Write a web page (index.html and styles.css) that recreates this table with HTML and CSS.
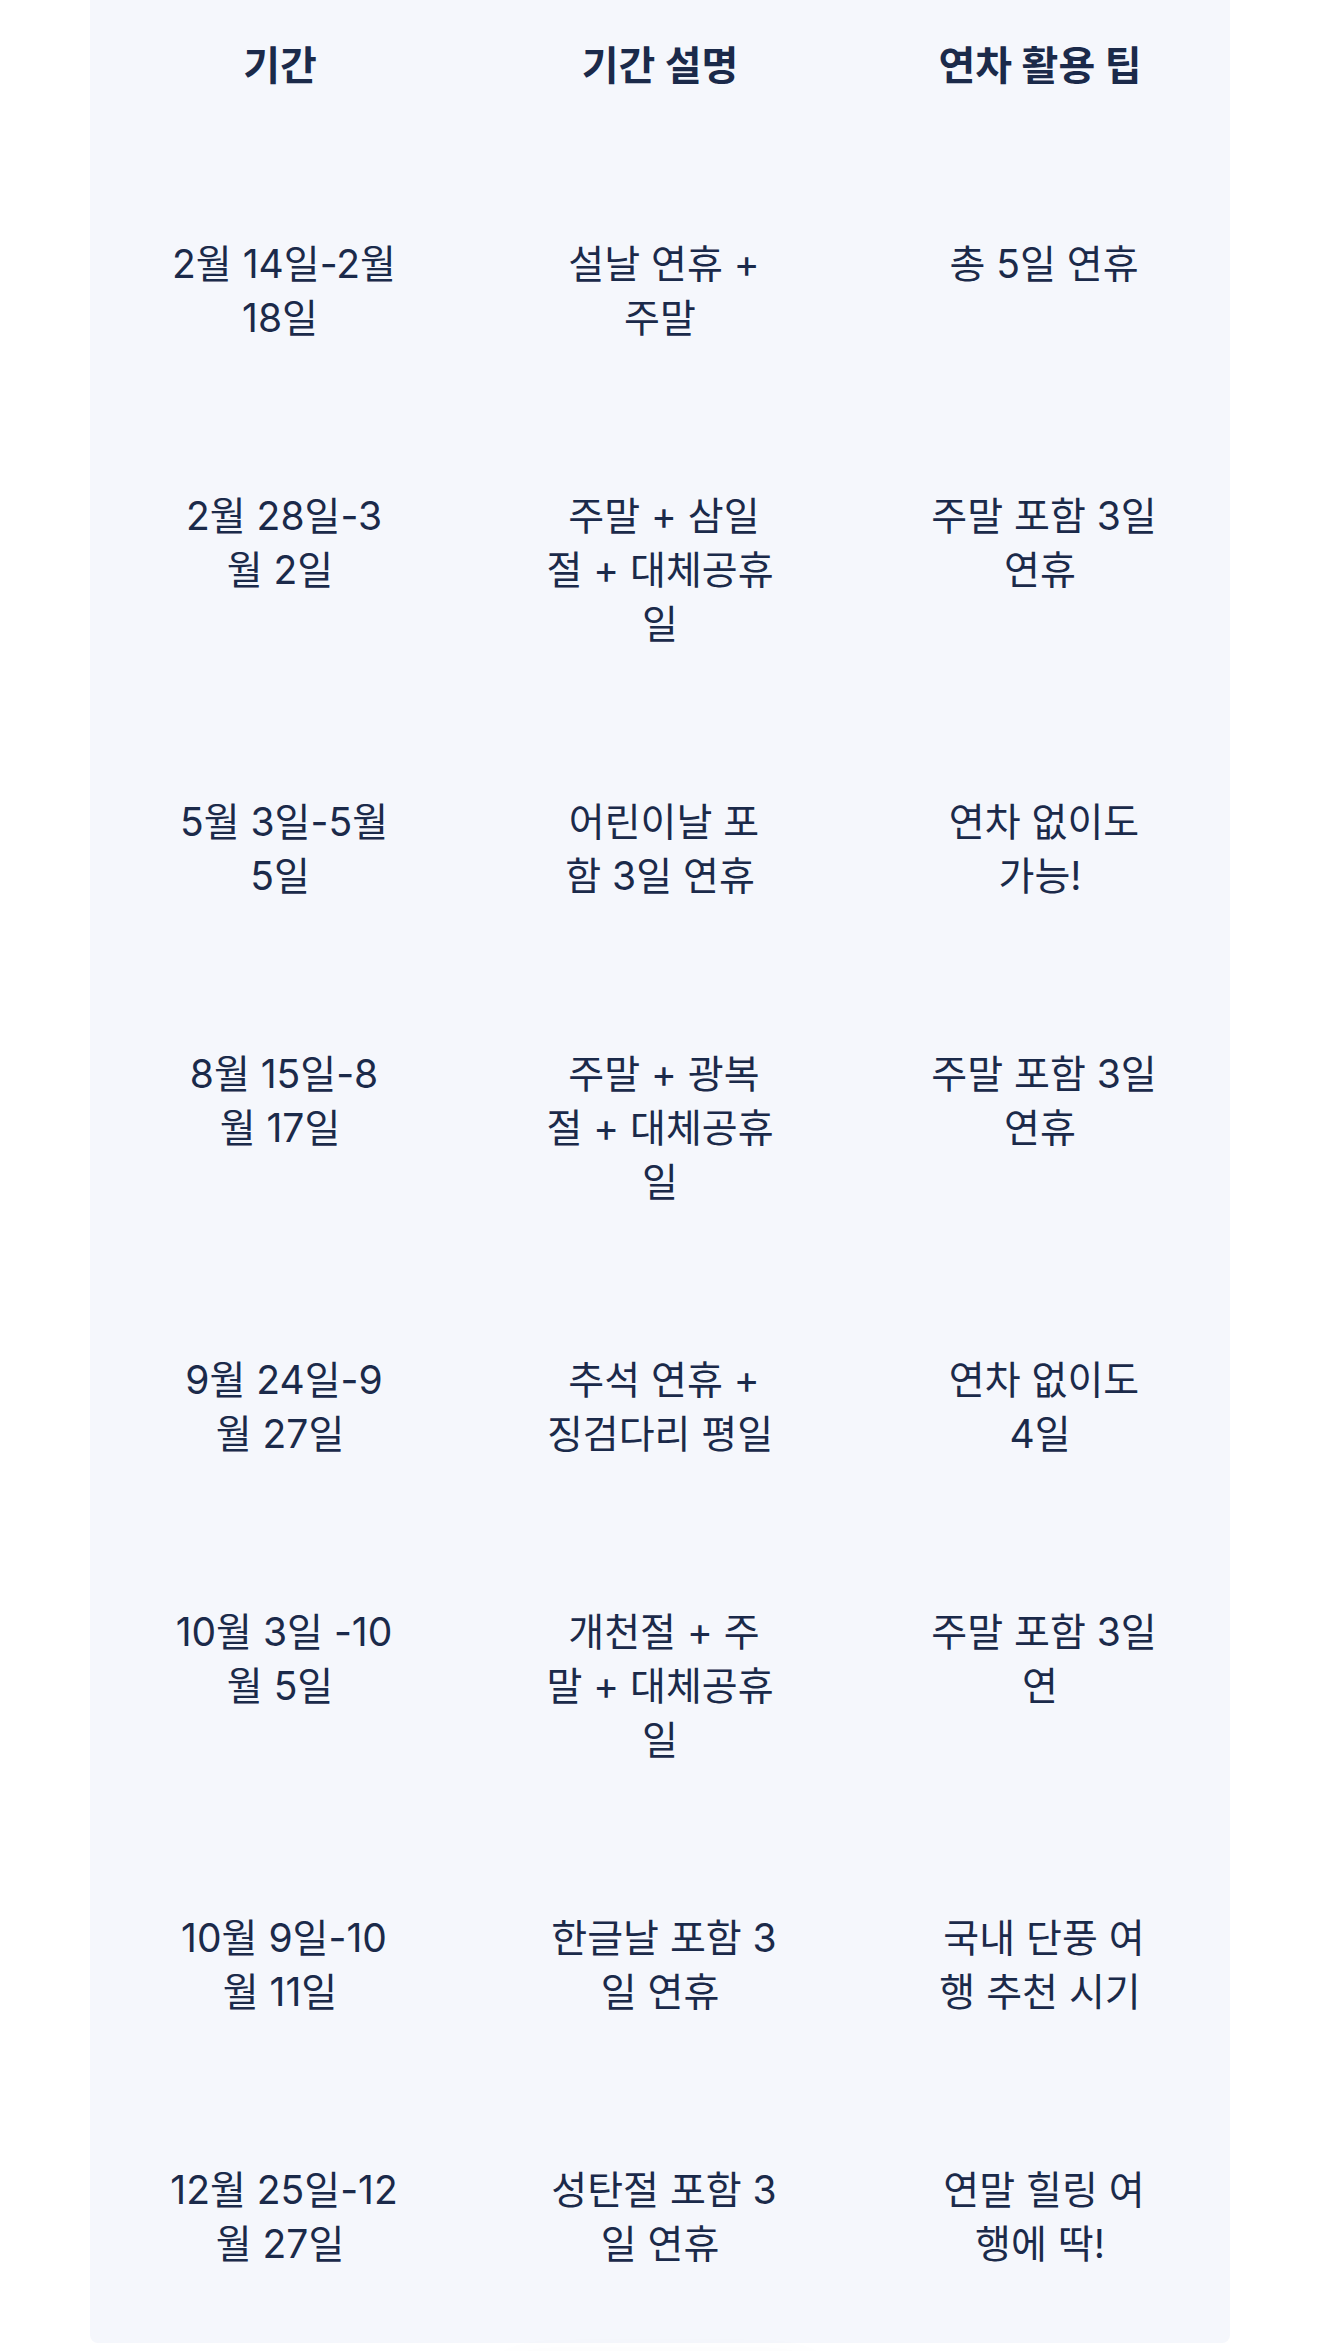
FILE: index.html
```html
<!DOCTYPE html>
<html lang="ko">
<head>
<meta charset="utf-8">
<title>연차 활용 가이드</title>
<link rel="stylesheet" href="styles.css">
</head>
<body>
<main class="page">
  <section class="card">
    <table class="holiday-table">
      <thead>
        <tr>
          <th>기간</th>
          <th>기간 설명</th>
          <th>연차 활용 팁</th>
        </tr>
      </thead>
      <tbody>
        <tr>
          <td>2월 14일-2월<br>18일</td>
          <td>설날 연휴 +<br>주말</td>
          <td>총 5일 연휴</td>
        </tr>
        <tr>
          <td>2월 28일-3<br>월 2일</td>
          <td>주말 + 삼일<br>절 + 대체공휴<br>일</td>
          <td>주말 포함 3일<br>연휴</td>
        </tr>
        <tr>
          <td>5월 3일-5월<br>5일</td>
          <td>어린이날 포<br>함 3일 연휴</td>
          <td>연차 없이도<br>가능!</td>
        </tr>
        <tr>
          <td>8월 15일-8<br>월 17일</td>
          <td>주말 + 광복<br>절 + 대체공휴<br>일</td>
          <td>주말 포함 3일<br>연휴</td>
        </tr>
        <tr>
          <td>9월 24일-9<br>월 27일</td>
          <td>추석 연휴 +<br>징검다리 평일</td>
          <td>연차 없이도<br>4일</td>
        </tr>
        <tr>
          <td>10월 3일 -10<br>월 5일</td>
          <td>개천절 + 주<br>말 + 대체공휴<br>일</td>
          <td>주말 포함 3일<br>연</td>
        </tr>
        <tr>
          <td>10월 9일-10<br>월 11일</td>
          <td>한글날 포함 3<br>일 연휴</td>
          <td>국내 단풍 여<br>행 추천 시기</td>
        </tr>
        <tr>
          <td>12월 25일-12<br>월 27일</td>
          <td>성탄절 포함 3<br>일 연휴</td>
          <td>연말 힐링 여<br>행에 딱!</td>
        </tr>
      </tbody>
    </table>
  </section>
  <div class="next-block"></div>
</main>
</body>
</html>
```

FILE: styles.css
```css
html, body {
  margin: 0;
  padding: 0;
  background: #ffffff;
}

body {
  font-family: Inter, "Noto Sans CJK KR", sans-serif;
  color: #1b2a4a;
  overflow: hidden;
}

.page {
  padding: 0 90px;
}

.card {
  margin-top: -33px;
  background: #f5f7fc;
  border-radius: 8px;
}

.holiday-table {
  width: 100%;
  table-layout: fixed;
  border-collapse: collapse;
}

.holiday-table th,
.holiday-table td {
  padding: 72px 24px;
  text-align: center;
  vertical-align: top;
  line-height: 54px;
  white-space: nowrap;
  color: #1b2a4a;
}

.holiday-table th {
  font-size: 40px;
  font-weight: 700;
  text-indent: 0;
}

.holiday-table td {
  font-size: 39px;
  font-weight: 400;
  text-indent: 8px;
}

.next-block {
  width: 330px;
  height: 80px;
  margin: 30px auto 0;
  border-radius: 40px;
  background: #ffffff;
  box-shadow: 0 0 44px rgba(40, 52, 90, 0.07);
}
```
